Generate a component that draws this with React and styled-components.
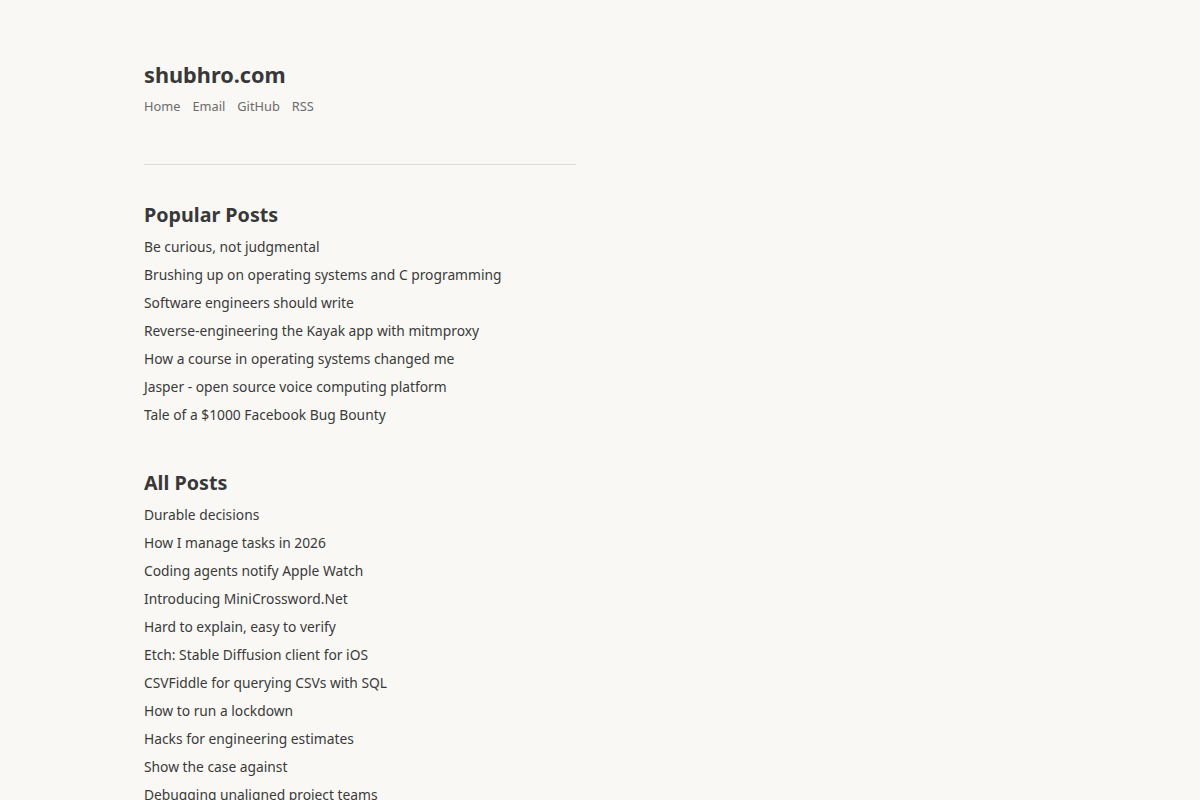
import React from "react";
import { styled, createGlobalStyle } from "styled-components";

const popularPosts = [
  "Be curious, not judgmental",
  "Brushing up on operating systems and C programming",
  "Software engineers should write",
  "Reverse-engineering the Kayak app with mitmproxy",
  "How a course in operating systems changed me",
  "Jasper - open source voice computing platform",
  "Tale of a $1000 Facebook Bug Bounty",
];

const allPosts = [
  "Durable decisions",
  "How I manage tasks in 2026",
  "Coding agents notify Apple Watch",
  "Introducing MiniCrossword.Net",
  "Hard to explain, easy to verify",
  "Etch: Stable Diffusion client for iOS",
  "CSVFiddle for querying CSVs with SQL",
  "How to run a lockdown",
  "Hacks for engineering estimates",
  "Show the case against",
  "Debugging unaligned project teams",
  "Hiring is a two way street",
];

const navLinks = ["Home", "Email", "GitHub", "RSS"];

function App() {
  return (
    <>
      <GlobalStyle />
      <Container>
        <Header>
          <Title>shubhro.com</Title>
          <Nav>
            {navLinks.map((item) => (
              <NavLink key={item} href="#">
                {item}
              </NavLink>
            ))}
          </Nav>
        </Header>
        <Divider />
        <Section>
          <Heading>Popular Posts</Heading>
          <PostList>
            {popularPosts.map((post) => (
              <li key={post}>
                <PostLink href="#">{post}</PostLink>
              </li>
            ))}
          </PostList>
        </Section>
        <Section $gap={40}>
          <Heading>All Posts</Heading>
          <PostList>
            {allPosts.map((post) => (
              <li key={post}>
                <PostLink href="#">{post}</PostLink>
              </li>
            ))}
          </PostList>
        </Section>
      </Container>
    </>
  );
}

export default App;

const GlobalStyle = createGlobalStyle`
  body {
    margin: 0;
    background: #f9f8f5;
    color: #333;
    font-family: "Noto Sans", "Open Sans", sans-serif;
  }
`;

const Container = styled.div`
  width: 432px;
  margin-left: 144px;
  padding-top: 60px;
`;

const Header = styled.header`
  display: flex;
  flex-direction: column;
  gap: 6px;
`;

const Title = styled.h1`
  margin: 0;
  font-size: 21.7px;
  line-height: 30px;
  font-weight: 700;
  color: #383838;
`;

const Nav = styled.nav`
  display: flex;
  gap: 12px;
`;

const NavLink = styled.a`
  font-size: 12.8px;
  line-height: 20px;
  color: #6b6b6b;
  text-decoration: none;
`;

const Divider = styled.hr`
  margin: 48px 0 0;
  border: none;
  border-top: 1px solid #dddbd7;
`;

const Section = styled.section`
  margin-top: ${(p) => p.$gap || 36}px;
`;

const Heading = styled.h2`
  margin: 0 0 4px;
  font-size: 19.7px;
  line-height: 28px;
  font-weight: 700;
  color: #383838;
`;

const PostList = styled.ul`
  list-style: none;
  margin: 0;
  padding: 0;
`;

const PostLink = styled.a`
  display: block;
  font-size: 13.8px;
  line-height: 28px;
  color: #3a3a3a;
  text-decoration: none;
`;
